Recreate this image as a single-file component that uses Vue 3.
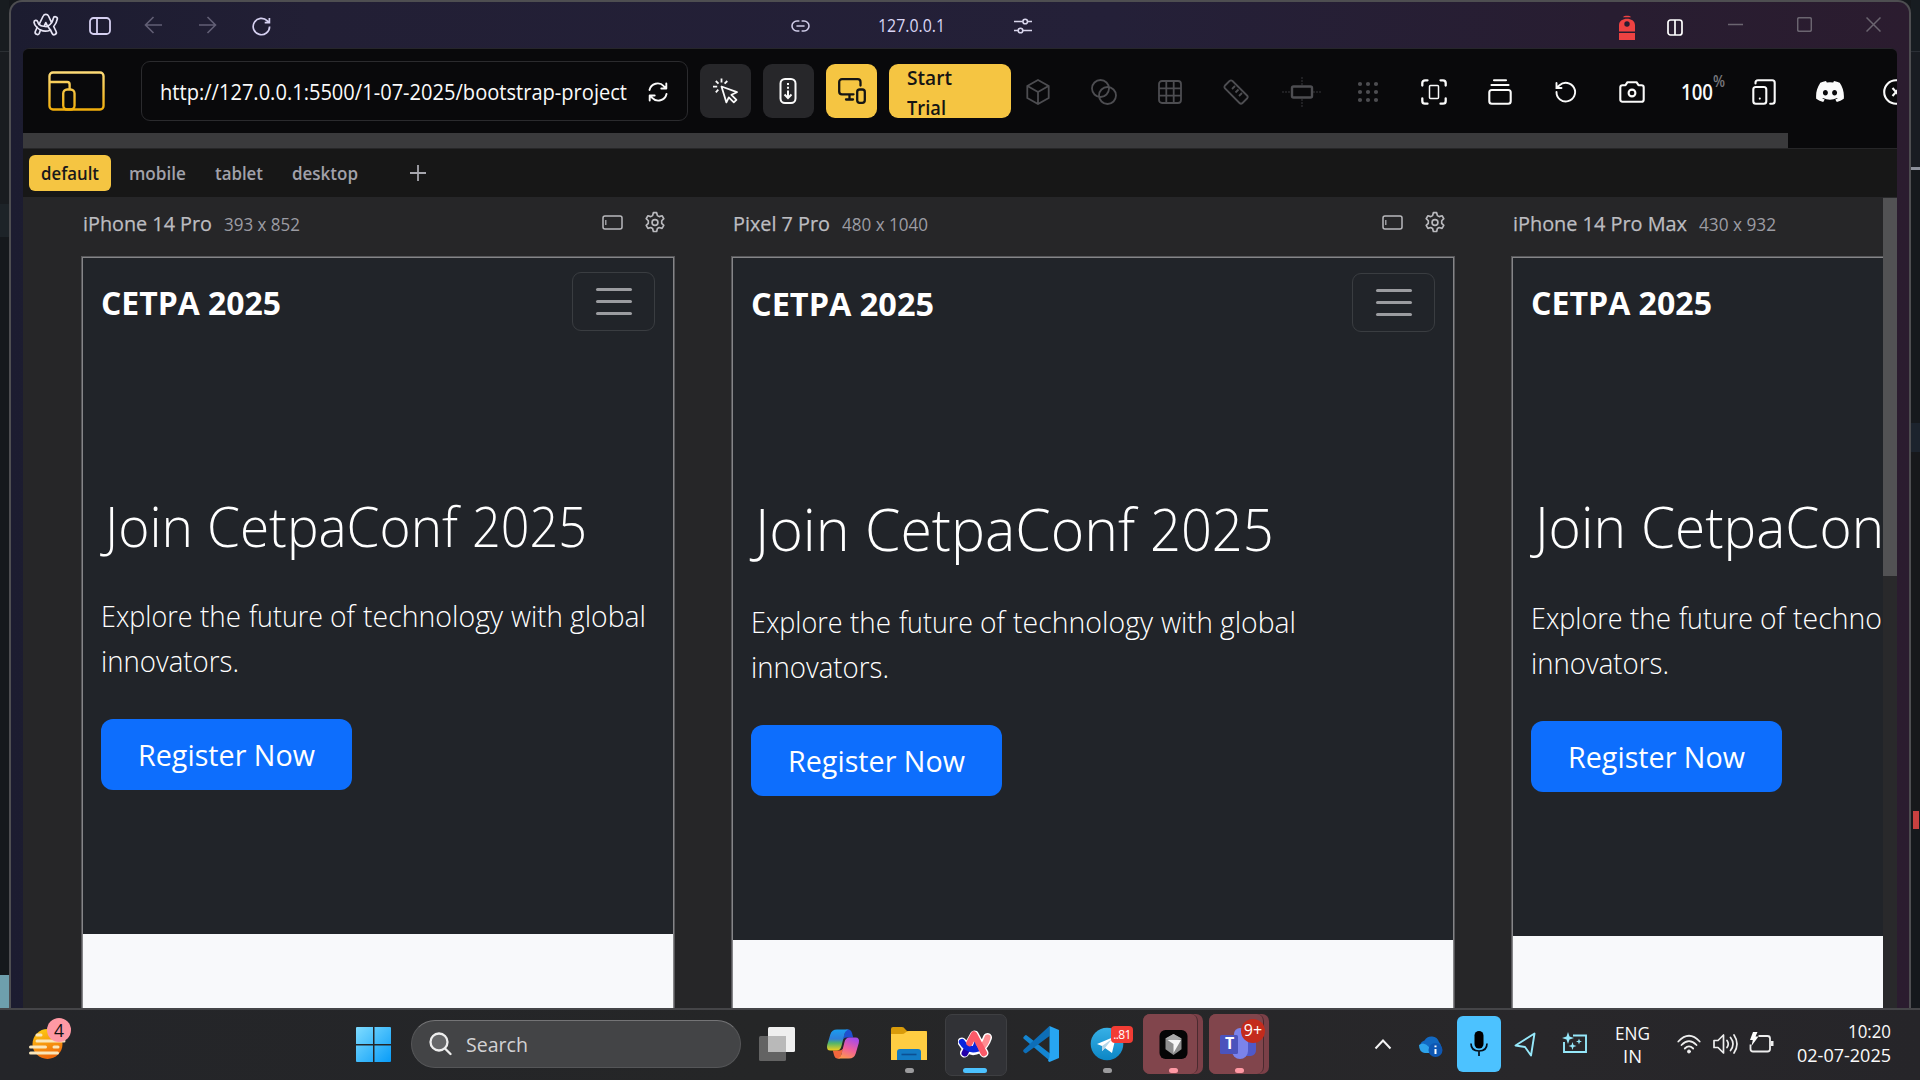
<script setup>
// Squeezes a text run horizontally so that it takes exactly the given width.
const vFit = {
  mounted(el, { value }) {
    const natural = el.getBoundingClientRect().width
    el.style.width = value + 'px'
    el.style.transform = `scaleX(${value / natural})`
  }
}

const tabs = [
  { name: 'default', width: 58, active: true },
  { name: 'mobile', width: 57 },
  { name: 'tablet', width: 48 },
  { name: 'desktop', width: 66 }
]

const devices = [
  { id: 'iphone', name: 'iPhone 14 Pro', nameWidth: 129, size: '393 x 852', sizeWidth: 76, brand: 180, scale: 1 },
  { id: 'pixel', name: 'Pixel 7 Pro', nameWidth: 97, size: '480 x 1040', sizeWidth: 86, brand: 183, scale: 1.076 },
  { id: 'promax', name: 'iPhone 14 Pro Max', nameWidth: 174, size: '430 x 932', sizeWidth: 77, brand: 181, scale: 1.034 }
]

const titleWords = [['Join', 88], ['CetpaConf', 251], ['2025', 115]]
const leadWords = [['Explore', 91.5], ['the', 41], ['future', 74], ['of', 25], ['technology', 140], ['with', 52], ['global', 76]]
</script>

<template>
  <div class="screen">
    <div class="desktop">
      <div class="edge left">
        <i class="edge-top"></i><i class="edge-mid"></i><i class="edge-tab"></i><i class="edge-teal"></i>
      </div>

      <div class="window">
        <header class="titlebar">
          <div class="tb-left">
            <svg class="arc-mark" width="26" height="24" viewBox="0 0 26 24" fill="none" stroke="#e6e4f4" stroke-width="1.7" stroke-linejoin="round" stroke-linecap="round">
              <path d="M7.500 17 6.300 20.300a2.200 2.200 0 0 1-4-1.800l1.800-4C2.300 12.900 1.200 11 1 9.300a1.900 1.900 0 0 1 3.700-.6c.2 1 .7 2 1.400 2.700L10.200 3c1-2.200 4.300-2.200 5.300 0l3.100 6.600c.9-1.300 1.400-2.800 1.700-4.200a2 2 0 0 1 4 .8c-.6 2.900-1.800 5.300-3.600 7.300l2.400 5a2.200 2.200 0 0 1-4 1.900l-1.700-3.500c-3.200 1.600-6.800 1.700-9.900.1Z" />
              <path d="m11.200 13.200 1.600-3.600 1.900 3.700c-1.200.4-2.400.3-3.500-.1ZM6.100 11.400c1.400 1.500 3.200 2 5.100 1.800M4.100 14.500c1 1 2.100 1.900 3.400 2.500M18.600 9.600c-1.100 1.700-2.500 3-3.900 3.700l2.700 3.600" />
            </svg>
            <svg width="22" height="18" viewBox="0 0 22 18" fill="none" stroke="#d5d0f0" stroke-width="1.8"><rect x="1" y="1" width="20" height="16" rx="3.500" /><path d="M8 1v16" /></svg>
            <svg class="dim" width="19" height="18" viewBox="0 0 19 18"><path d="M18 9H1.500M9.500 1 1.500 9l8 8" /></svg>
            <svg class="dim" width="19" height="18" viewBox="0 0 19 18"><path d="M1 9h16.500M9.500 1l8 8-8 8" /></svg>
            <svg width="19" height="19" viewBox="0 0 19 19" fill="none" stroke="#d5d0f0" stroke-width="1.700"><path d="M17.600 9.500a8.200 8.200 0 1 1-2.300-5.700l1.700 1.700M17.400 1v4.700h-4.700" /></svg>
          </div>
          <div class="tb-mid">
            <svg width="19" height="12" viewBox="0 0 19 12" fill="none" stroke="#cfcbe8" stroke-width="1.600" stroke-linecap="round"><path d="M7.800 1H6a5 5 0 0 0 0 10h1.800M11.200 1H13a5 5 0 0 1 0 10h-1.800M6 6h7" /></svg>
            <span class="host"><span v-fit="67" class="t">127.0.0.1</span></span>
            <svg width="18" height="16" viewBox="0 0 18 16" fill="none" stroke="#d9d6ec" stroke-width="1.600"><path d="M0 3.500h8.500M14 3.500h4M0 12.500h4M9 12.500h9" /><circle cx="11.200" cy="3.500" r="2.300" /><circle cx="6.500" cy="12.500" r="2.300" /></svg>
          </div>
          <div class="tb-right">
            <svg class="siren" width="16" height="25" viewBox="0 0 16 25" fill="#ee4242"><path d="M4 2.300C5 .4 11 .4 12 2.300ZM0 16.500V10C0 1.500 16 1.500 16 10v6.500ZM0 18h16v7H0Z" /><circle cx="8" cy="9" r="2.700" fill="#281c31" /></svg>
            <svg class="split" width="16" height="17" viewBox="0 0 16 17" fill="none" stroke="#fff" stroke-width="1.700"><rect x="1" y="1" width="14" height="15" rx="2.500" /><path d="M8 1v15" /></svg>
            <svg class="win" width="15" height="15" viewBox="0 0 15 15"><path d="M0 7.500h15" /></svg>
            <svg class="win" width="15" height="15" viewBox="0 0 15 15"><rect x=".7" y=".7" width="13.600" height="13.600" rx="1.500" /></svg>
            <svg class="win" width="15" height="15" viewBox="0 0 15 15"><path d="m.5.5 14 14m0-14-14 14" /></svg>
          </div>
        </header>

        <main class="panel">
          <div class="toolbar">
            <svg class="logo" width="57" height="40" viewBox="0 0 58 40" preserveAspectRatio="none" fill="none" stroke="url(#gold)" stroke-width="2.400">
              <defs><linearGradient id="gold" x1="0" y1="0" x2="0" y2="40" gradientUnits="userSpaceOnUse"><stop offset="0" stop-color="#fddc7a" /><stop offset="1" stop-color="#f0ac08" /></linearGradient></defs>
              <rect x="1.500" y="1.500" width="55" height="37" rx="3.500" /><path d="M1.500 11h18q2.500 0 2.500 2.500V19" /><rect x="15.500" y="18.500" width="11.500" height="20" rx="4" />
            </svg>
            <div class="url">
              <span v-fit="467" class="t">http://127.0.0.1:5500/1-07-2025/bootstrap-project</span>
              <svg width="20" height="20" viewBox="0 0 20 20" fill="none" stroke="#fafafa" stroke-width="1.900" stroke-linecap="round" stroke-linejoin="round"><path d="M1.500 8A8.300 8.300 0 0 1 15.800 4.200L18 6.500M18.300 1.500v5h-5M18.500 12A8.300 8.300 0 0 1 4.200 15.800L2 13.500M1.700 18.500v-5h5" /></svg>
            </div>
            <div class="btn">
              <svg width="26" height="26" viewBox="0 0 26 26" fill="none" stroke="#fafafa" stroke-width="1.800" stroke-linejoin="round"><path d="M8.500 8.500 24 14.200l-5.600 2.600 5 5-2.600 2.600-5-5-2.400 5ZM8.500.5v4M2.800 3l2.700 2.700M0 8.700h4.200M2.800 14.300l2.500-2.600M14.300 3l-2.700 2.700" /></svg>
            </div>
            <div class="btn scroll-sync">
              <svg width="18" height="26" viewBox="0 0 18 26" fill="none" stroke="#fafafa" stroke-width="2"><rect x="1.500" y="1" width="15" height="24" rx="4.500" /><path d="M9 5v8" stroke-dasharray="2 1.800" /><path d="M9 13v6.500M5.500 16.500 9 20l3.500-3.500" /></svg>
            </div>
            <div class="btn gold">
              <svg width="28" height="26" viewBox="0 0 28 26" fill="none" stroke="#141414" stroke-width="2.300" stroke-linecap="round"><path d="M22.500 7.500V4a2.800 2.800 0 0 0-2.800-2.800H4A2.800 2.800 0 0 0 1.200 4v9.500A2.800 2.800 0 0 0 4 16.300h11.500M11.500 17v4.500M8 21.500h7" /><rect x="19.200" y="11.500" width="7.600" height="13.300" rx="2.500" /></svg>
            </div>
            <div class="trial"><span v-fit="45" class="t">Start</span><span v-fit="39" class="t">Trial</span></div>
            <div class="tools">
              <div class="tool off"><svg width="24" height="26" viewBox="0 0 24 26"><path d="M12 1 22.700 7v12L12 25 1.300 19V7ZM1.500 7 12 13l10.500-6M12 13v12" /></svg></div>
              <div class="tool off"><svg width="26" height="26" viewBox="0 0 26 26"><circle cx="9.500" cy="9.500" r="8.500" /><circle cx="16.500" cy="16.500" r="8.500" /></svg></div>
              <div class="tool off"><svg width="24" height="24" viewBox="0 0 24 24"><rect x="1" y="1" width="22" height="22" rx="3" /><path d="M8.300 1v22M15.700 1v22M1 8.300h22M1 15.700h22" /></svg></div>
              <div class="tool off"><svg width="26" height="26" viewBox="0 0 26 26"><path d="M2 6.500 6.500 2Q8 .8 9.500 2L24 16.500q1.500 1.500 0 3L19.500 24q-1.500 1.500-3 0L2 9.500Q.8 8 2 6.500ZM9 10l3-3M12.500 13.500l3-3M16 17l3-3" /></svg></div>
              <div class="tool off"><svg width="40" height="30" viewBox="0 0 40 30"><rect x="10" y="9.500" width="20" height="11" rx="1.500" stroke-width="2.400" /><path d="M0 15h9M31 15h9M20 0v8M20 22v8" stroke-width="1" stroke-dasharray="2 1" opacity=".7" /></svg></div>
              <div class="tool off"><svg width="22" height="22" viewBox="0 0 22 22"><path d="M3 3h0M11 3h0M19 3h0M3 11h0M11 11h0M19 11h0M3 19h0M11 19h0M19 19h0" stroke-width="4.200" stroke-linecap="round" /></svg></div>
              <div class="tool"><svg width="26" height="26" viewBox="0 0 26 26" stroke-linecap="round"><path d="M1.300 6.500V4a2.700 2.700 0 0 1 2.700-2.700h2.500M19.500 1.300H22A2.700 2.700 0 0 1 24.700 4v2.500M24.700 19.500V22a2.700 2.700 0 0 1-2.700 2.700h-2.500M6.500 24.700H4A2.700 2.700 0 0 1 1.300 22v-2.500" stroke-width="2.300" /><rect x="8.500" y="6.500" width="9" height="13" rx="1" stroke-width="1.500" /></svg></div>
              <div class="tool"><svg width="24" height="26" viewBox="0 0 24 26" stroke-linecap="round"><path d="M6 1.300h12M3.500 6h17" /><rect x="1.300" y="11" width="21.400" height="13.800" rx="2.500" /></svg></div>
              <div class="tool"><svg width="22" height="22" viewBox="0 0 22 22" stroke-linecap="round"><path d="M1.500 11A9.300 9.300 0 1 0 4.500 4.300L1.500 7M1.500 2v5h5" stroke-width="1.900" /></svg></div>
              <div class="tool"><svg width="26" height="22" viewBox="0 0 26 22" stroke-linejoin="round"><path d="M8.500 1.200h9l2 3h3q2.200 0 2.200 2.200v12q0 2.300-2.200 2.300H3.500q-2.200 0-2.200-2.300v-12q0-2.200 2.200-2.200h3Z" /><circle cx="13" cy="12" r="3.400" /></svg></div>
              <div class="tool zoom"><span v-fit="32" class="t">100</span><span v-fit="12" class="t pct">%</span></div>
              <div class="tool"><svg width="24" height="26" viewBox="0 0 24 26" stroke-linecap="round"><rect x="1.300" y="8" width="13" height="16.800" rx="2.500" /><path d="M3.500 4.500v-.7q0-2.500 2.500-2.500h14.200q2.500 0 2.500 2.500v18.500q0 2.500-2.500 2.500h-2M7.800 19.500v.1" /></svg></div>
              <div class="tool solid"><svg width="28" height="21" viewBox="0 0 28 21"><path d="M23.700 1.800A23 23 0 0 0 18 0l-.8 1.600a21 21 0 0 0-6.400 0L10 0a23 23 0 0 0-5.700 1.800C.7 7.200-.3 12.500.2 17.700A23 23 0 0 0 7.200 21l1.500-2.400-2.300-1.100.5-.4a16.500 16.500 0 0 0 14.200 0l.5.4-2.300 1.100L20.800 21a23 23 0 0 0 7-3.300c.6-6-1-11.200-4.100-15.900ZM9.400 14.500c-1.400 0-2.500-1.300-2.500-2.800s1.100-2.800 2.500-2.800 2.500 1.300 2.500 2.800-1.100 2.800-2.500 2.800Zm9.200 0c-1.400 0-2.500-1.300-2.500-2.800s1.100-2.800 2.500-2.800 2.500 1.300 2.500 2.800-1.100 2.800-2.500 2.800Z" /></svg></div>
              <div class="tool"><svg width="26" height="26" viewBox="0 0 26 26"><circle cx="13" cy="13" r="11.800" /><path d="m9.500 9 7 8m0-8-7 8" /></svg></div>
            </div>
          </div>
          <div class="hscroll"><i></i></div>

          <nav class="tabs">
            <span v-for="tab in tabs" :key="tab.name" class="tab" :class="{ active: tab.active }"><span v-fit="tab.width" class="t">{{ tab.name }}</span></span>
            <svg width="16" height="16" viewBox="0 0 16 16" stroke="#a6a6ad" stroke-width="1.800"><path d="M8 0v16M0 8h16" /></svg>
          </nav>

          <div class="canvas">
            <div class="devices">
              <section v-for="d in devices" :key="d.id" class="device" :class="d.id">
                <div class="caption">
                  <span v-fit="d.nameWidth" class="t name">{{ d.name }}</span>
                  <span v-fit="d.sizeWidth" class="t size">{{ d.size }}</span>
                  <svg class="rotate" width="21" height="15" viewBox="0 0 21 15" fill="none" stroke="#b9b9bd" stroke-width="1.500"><rect x="1" y="1" width="19" height="13" rx="2" /><path d="M3.800 5v5" stroke-width="1.200" /></svg>
                  <svg class="gear" width="22" height="23" viewBox="0 0 24 24" fill="none" stroke="#b9b9bd" stroke-width="1.800" stroke-linejoin="round"><path d="M10.200 1.300h3.600l.8 3.200 2 1.100 3.100-1 1.900 3.200-2.300 2.300v2.800l2.300 2.300-1.900 3.200-3.100-.9-2 1.100-.8 3.200h-3.600l-.8-3.200-2-1.100-3.100.9-1.900-3.200 2.300-2.300v-2.800L2.400 7.800l1.900-3.200 3.100 1 2-1.100Z" /><circle cx="12" cy="12" r="3.200" /></svg>
                </div>
                <div class="frame">
                  <div class="hero">
                    <div class="navbar">
                      <span v-fit="d.brand" class="t brand">CETPA 2025</span>
                      <div class="toggler"><i></i><i></i><i></i></div>
                    </div>
                    <div class="title"><template v-for="w in titleWords" :key="w[0]"><span v-fit="w[1] * d.scale" class="t">{{ w[0] }}</span>{{ ' ' }}</template></div>
                    <div class="lead">
                      <div><template v-for="w in leadWords" :key="w[0]"><span v-fit="w[1]" class="t">{{ w[0] }}</span>{{ ' ' }}</template></div>
                      <div><span v-fit="138" class="t">innovators.</span></div>
                    </div>
                    <div class="register"><span v-fit="177" class="t">Register Now</span></div>
                  </div>
                </div>
              </section>
            </div>
            <div class="vscroll"><i></i></div>
          </div>
        </main>
      </div>

      <div class="edge right">
        <i class="r1"></i><i class="r2"></i><i class="r3"></i><i class="r4"></i><i class="r5"></i><i class="r6"></i><i class="r7"></i>
      </div>
    </div>

    <footer class="taskbar">
      <div class="weather">
        <svg width="42" height="40" viewBox="0 0 42 40"><defs><linearGradient id="sun" x1="0" y1="0" x2=".3" y2="1"><stop offset="0" stop-color="#ffd313" /><stop offset="1" stop-color="#ef6a0b" /></linearGradient></defs><circle cx="18.500" cy="20" r="15" fill="url(#sun)" /><path d="M8 11h4M8 17h27M1.500 23h15M25 23h4M1.500 29h27" stroke="#fae6ba" stroke-width="3" stroke-linecap="round" /></svg>
        <b class="badge">4</b>
      </div>
      <svg class="start" width="36" height="36" viewBox="0 0 36 36"><defs><linearGradient id="win" x1="0" y1="0" x2="1" y2="1" ><stop offset="0" stop-color="#7fdcff" /><stop offset="1" stop-color="#089cf8" /></linearGradient></defs><path d="M1 0h16v17H0V1q0-1 1-1ZM18.500 0H34q1 0 1 1v16H18.500ZM0 18.500h17V35H1q-1 0-1-1ZM18.500 18.500H35V34q0 1-1 1H18.500Z" fill="url(#win)" /></svg>
      <div class="search">
        <svg width="23" height="24" viewBox="0 0 23 24" fill="none" stroke="#eee" stroke-width="2.300" stroke-linecap="round"><circle cx="10" cy="10" r="8.500" fill="#666769" /><path d="m16 16.500 5.500 5.500" /></svg>
        <span v-fit="62" class="t">Search</span>
      </div>
      <div class="apps">
        <div class="app"><svg width="36" height="35" viewBox="0 0 36 35"><rect x="9" width="27" height="25" rx="1.500" fill="#efefef" /><rect y="9" width="27" height="25" rx="1.500" fill="#636363" /><path d="M9 9h18v16H9z" fill="#b9b9b9" /></svg></div>
        <div class="app"><svg width="34" height="32" viewBox="0 0 34 32"><defs><linearGradient id="cpa" x1="0" y1="0" x2="0" y2="1"><stop offset="0" stop-color="#1a9df0" /><stop offset=".45" stop-color="#2f7fd8" /><stop offset=".65" stop-color="#52b56a" /><stop offset="1" stop-color="#f3cf1c" /></linearGradient><linearGradient id="cpb" x1=".6" y1="0" x2=".2" y2="1"><stop offset="0" stop-color="#a84be8" /><stop offset=".5" stop-color="#f0609a" /><stop offset="1" stop-color="#ff9b48" /></linearGradient></defs><path d="M20 1.500h2.500q2.500 0 3.500 3.500l1.200 4.500H21q-4 0-5 4Z" fill="#1f4fd0" /><path d="M14 30.500h-2.500Q9 30.500 8 27l-1.200-4.500H13q4 0 5-4Z" fill="#f2663c" /><path d="M11 1.500h12q-3.500.5-4.500 4.500l-3 12q-1 4.500-5 4.500H4.500q-4.500 0-3.300-5.500L4.300 6.500Q5.800 1.500 11 1.500Z" fill="url(#cpa)" /><path d="M23 30.500H11q3.500-.5 4.500-4.500l3-12q1-4.500 5-4.500h6q4.500 0 3.300 5.500l-3.100 10.500q-1.500 5-6.700 5Z" fill="url(#cpb)" /></svg></div>
        <div class="app run"><svg width="36" height="34" viewBox="0 0 36 34"><path d="M0 2Q0 0 2 0h9q2 0 3 2l2 2H36v12H0Z" fill="#d99b0a" /><path d="M0 7h11q2 0 3.500-1.500T18 4h16q2 0 2 2v27H0Z" fill="#ffcd42" /><path d="M6 33V25q0-3 3-3h18q3 0 3 3v8Z" fill="#137bc4" /><path d="M10.500 27.500h15" stroke="#0c4f92" stroke-width="1.600" /></svg></div>
        <div class="app run current"><svg width="34" height="30" viewBox="0 0 34 30" fill="none" stroke-linecap="round" stroke-linejoin="round"><path d="M6.500 24 16.500 6l9.500 18M4 13q7 12 17 7 6-4 8.500-11.500" stroke="#fff" stroke-width="9" /><path d="M29.500 8.500q-1.500 6-6 10" stroke="#ff8d92" stroke-width="6" /><path d="M6.800 24.200 10 18" stroke="#2400a8" stroke-width="6.500" /><path d="M4 13q5.500 9.500 16 6.500" stroke="#0a25dc" stroke-width="6.300" /><path d="m11.500 14 4.500-8.500 9.800 18.500" stroke="#fb5a68" stroke-width="6.500" /><path d="M16.500 12.500 20 20.500h-6.500Z" fill="#0a25dc" /></svg></div>
        <div class="app"><svg width="36" height="36" viewBox="0 0 36 36"><path d="m3.500 9.300 23.500 18.200V35L1 13q-1.500-1.300 0-2.600l1-1q.7-.7 1.500-.1Z" fill="#1485d1" /><path d="M26.500 0v10L3.500 27q-1 .6-1.700 0L.8 26q-1.300-1.300 0-2.600Z" fill="#0d6eb8" /><path d="M26.500 0 36 4v28l-9.500 4-1.500-1 1.500-4Z" fill="#27a5f2" /></svg></div>
        <div class="app run telegram"><svg width="34" height="34" viewBox="0 0 34 34"><defs><linearGradient id="tg" x1="0" y1="0" x2="0" y2="1"><stop offset="0" stop-color="#37b0e6" /><stop offset="1" stop-color="#0c86c5" /></linearGradient></defs><circle cx="17" cy="17" r="16.300" fill="url(#tg)" /><path d="M7 17 26 9l-4 17-7-5-3 3v-5Z" fill="#fff" /><path d="m12 19 10-7-7 9-3 3Z" fill="#b4d5e8" /></svg><b class="count">..81</b></div>
        <div class="app run alert"><div class="tile"></div><svg width="29" height="29" viewBox="0 0 28 29"><rect width="28" height="29" rx="6" fill="#050505" /><path d="m14 4 8 4.500v10.800L14 25l-8-5.700V8.500Z" fill="#8f8f8f" /><path d="m6 8.500 8-4.500 8 4.500-8 3Z" fill="#aaa" /><path d="M8 10h13.500L14 23v-9Z" fill="#f7f7f7" /></svg></div>
        <div class="app run alert teams"><div class="tile"></div><svg width="38" height="34" viewBox="0 0 38 34"><circle cx="20" cy="7" r="6" fill="#7b83eb" /><path d="M26 11h10v12q0 5-5 6h-5Z" fill="#5059c9" /><path d="M12 11h16v13a8 8 0 0 1-16 0Z" fill="#7b83eb" /><rect y="8" width="18" height="19" rx="1.500" fill="#4b53bc" /></svg><em>T</em><b class="badge">9+</b></div>
      </div>
      <div class="tray">
        <svg class="chev" width="18" height="11" viewBox="0 0 18 11" fill="none" stroke="#f4f4f4" stroke-width="2"><path d="m1.500 9.500 7.500-8 7.500 8" /></svg>
        <svg class="cloud" width="26" height="22" viewBox="0 0 26 22"><path d="M7 18a6.500 6.500 0 0 1-.5-12.500A8 8 0 0 1 21 7q3 3 2 8l-5 3Z" fill="#1269c2" /><path d="M1 10q5-4 10 2l4 6H7Q1 17 1 10Z" fill="#2da3ea" /><circle cx="17.500" cy="15" r="7" fill="#0e57b3" /><path d="M17.500 14v5M17.500 10.500v1.800" stroke="#fff" stroke-width="2" /></svg>
        <div class="mic"><svg width="18" height="26" viewBox="0 0 18 26"><rect x="4.500" width="9" height="17.500" rx="4.500" /><path d="M1 12.500q0 7.500 8 7.500t8-7.500M9 20v5" fill="none" stroke="#05101a" stroke-width="1.700" /></svg></div>
        <svg class="nav" width="22" height="25" viewBox="0 0 22 25" fill="none" stroke="#96e8fa" stroke-width="1.900" stroke-linejoin="round"><path d="M20.500 1.500 17 23.500l-6-8.500L1.500 13.500Z" /></svg>
        <svg class="snip" width="26" height="22" viewBox="0 0 26 22"><path d="M11 3.500h13V20H2V10" fill="none" stroke="#96e8fa" stroke-width="1.900" /><path d="m6 0 1.500 4.500L12 6 7.500 7.500 6 12 4.500 7.500 0 6l4.500-1.500ZM10.500 10l1 3 3 1-3 1-1 3-1-3-3-1 3-1ZM17 6.500l.8 2.200 2.200.8-2.200.8-.8 2.200-.8-2.200-2.200-.8 2.200-.8Z" fill="#96e8fa" /></svg>
        <div class="lang"><span v-fit="35" class="t">ENG</span><span v-fit="19" class="t">IN</span></div>
        <svg class="wifi" width="24" height="20" viewBox="0 0 24 20" fill="none" stroke="#eee" stroke-width="1.800" stroke-linecap="round"><path d="M1.300 7.500q10.700-11.500 21.400 0M4.500 11q7.500-7.800 15 0M7.800 14.500q4.200-4.200 8.400 0" /><circle cx="12" cy="17.500" r="1.500" fill="#eee" stroke-width="1" /></svg>
        <svg class="sound" width="25" height="22" viewBox="0 0 25 22" fill="none" stroke="#eee" stroke-width="1.700" stroke-linejoin="round" stroke-linecap="round"><path d="M1 7.500h4L10.500 2v18L5 14.500H1ZM14 7.500q2.500 3.500 0 7M17.500 4.500q5 6.500 0 13M21 2q6 9 0 18" /></svg>
        <svg class="battery" width="25" height="21" viewBox="0 0 25 21" fill="none" stroke="#eee" stroke-width="1.800"><path d="M9.500 4h9q2.500 0 2.500 2.500V17q0 2.500-2.500 2.500H4q-2.500 0-2.500-2.500v-4.500" /><path d="M23.200 9v5" stroke-width="2.600" /><path d="M4 0h4.500L6.500 4.500h3L2.500 14l1.300-6H1Z" fill="#fff" stroke="none" /></svg>
        <div class="clock"><span v-fit="43" class="t">10:20</span><span v-fit="94" class="t">02-07-2025</span></div>
      </div>
    </footer>
  </div>
</template>

<style>
body { margin: 0; background: #14171b; overflow: hidden; }
</style>

<style scoped>
* { box-sizing: border-box; }
.screen { width: 1920px; height: 1080px; overflow: hidden; display: flex; flex-direction: column; background: #15181c; color: #fafafa; font-family: "Open Sans", "Noto Sans", sans-serif; }
svg { display: block; flex: none; }
i { display: block; }
.t { display: inline-block; white-space: nowrap; transform-origin: 0 50%; flex: none; }

.desktop { height: 1008px; display: flex; }
.edge { width: 9px; display: flex; flex-direction: column; }
.edge-top { height: 52px; background: #181c20; border-bottom: 1px solid #2b2f33; }
.edge-mid { height: 152px; background: #191c20; }
.edge-tab { height: 33px; background: #1d2328; }
.edge-teal { margin-top: auto; height: 33px; background: #6e9fad; }
.r1 { height: 52px; background: #171c21; border-bottom: 1px solid #2b2f36; }
.r2 { height: 115px; background: #191c22; }
.r3 { height: 3px; background: #8d919c; }
.r4 { height: 253px; background: #16191d; }
.r5 { height: 29px; background: #1c232d; }
.r6 { height: 359px; background: #17181b; }
.r7 { height: 18px; width: 6px; margin-left: 2px; background: #c84040; }

.window { width: 1902px; height: 1008px; border: 2px solid #4e4e51; border-bottom: 0; border-radius: 13px 13px 0 0; overflow: hidden; display: flex; flex-direction: column; background: linear-gradient(90deg, #1c1c30 0, #221f35 300px, #242038 1100px, #281d31 1600px, #2b1c2f 100%); }
.titlebar { height: 46px; display: flex; align-items: center; flex: none; padding-bottom: 1px; }
.tb-left { display: flex; align-items: center; padding-left: 22px; width: 780px; }
.tb-left svg { margin-right: 35px; margin-top: 3px; }
.tb-left .arc-mark { margin-right: 30px; margin-top: 1px; }
.tb-left svg:nth-child(2) { margin-right: 33px; }
.tb-left .dim { fill: none; stroke: #625f75; stroke-width: 1.6; margin-top: 1px; }
.tb-mid { display: flex; align-items: center; }
.tb-mid svg { margin-top: 3px; }
.host { margin-left: 68px; width: 67px; margin-right: 69px; font-size: 18px; line-height: 24px; color: #d9d5f4; }
.tb-right { margin-left: auto; display: flex; align-items: center; padding-right: 28px; }
.siren { margin: 5px 32px 0 0; }
.split { margin: 5px 45px 0 0; }
.win { fill: none; stroke: #6b6570; stroke-width: 1.5; margin-left: 54px; }
.split + .win { margin-left: 0; }

.panel { margin: 0 12px 0 12px; flex: 1; min-height: 0; background: #09090b; border-radius: 6px 6px 0 0; border-top: 1px solid #26262a; display: flex; flex-direction: column; overflow: hidden; }
.toolbar { height: 84px; display: flex; align-items: center; padding: 0 0 0 25px; overflow: hidden; flex: none; }
.url { width: 547px; height: 60px; margin-left: 36px; border: 1px solid #2b2b2e; border-radius: 9px; display: flex; align-items: center; padding: 2px 19px 0 18px; justify-content: space-between; font-size: 21px; line-height: 30px; flex: none; }
.btn { width: 51px; height: 54px; border-radius: 9px; background: #27272a; margin-left: 12px; display: flex; align-items: center; justify-content: center; flex: none; }
.scroll-sync { padding-right: 1px; }
.gold { background: #f5c542; }
.trial { width: 122px; height: 54px; margin-left: 12px; border-radius: 9px; background: #f5c542; color: #141414; padding: 2px 0 0 18px; font-size: 20.500px; font-weight: 600; line-height: 30px; display: flex; flex-direction: column; justify-content: center; align-items: flex-start; flex: none; }
.tools { display: flex; margin-left: -6px; padding-top: 1px; flex: none; }
.tool { width: 66px; height: 54px; display: flex; align-items: center; justify-content: center; flex: none; }
.tool svg { fill: none; stroke: #fafafa; stroke-width: 2.1; }
.tool.off svg { stroke: #4d4d51; stroke-width: 1.8; }
.tool.solid svg { fill: #fafafa; stroke: none; }
.zoom { font-size: 21px; font-weight: 600; line-height: 30px; padding-left: 9px; }
.pct { font-size: 16px; color: #77777c; font-weight: 600; margin-top: -22px; }
.hscroll { height: 15px; background: #09090b; flex: none; }
.hscroll i { width: 1765px; height: 15px; background: #3a3a3c; }
.tabs { height: 49px; border-top: 1px solid #262628; background: #171717; display: flex; align-items: center; padding: 0 0 4px 6px; flex: none; }
.tab { height: 36px; display: flex; align-items: center; margin-top: 3px; margin-right: 29px; border-radius: 6px; font-size: 17.500px; font-weight: 600; line-height: 24px; color: #a1a1aa; }
.tab.active { padding: 0 12px; background: #f5c542; color: #18181b; margin-right: 18px; }
.tabs svg { margin-left: 23px; margin-top: 3px; }

.canvas { flex: 1; min-height: 0; display: flex; background: #262628; }
.devices { flex: 1; min-width: 0; display: flex; gap: 56px; padding-left: 58px; overflow: hidden; }
.device { flex: none; width: 594px; display: flex; flex-direction: column; }
.pixel { width: 724px; }
.promax { width: 649px; }
.caption { height: 59px; padding: 0 9px 7px 2px; display: flex; align-items: center; flex: none; }
.name { font-size: 20.500px; font-weight: 500; line-height: 28px; color: #bdbdc1; margin-right: 12px; -webkit-text-stroke: .25px #bdbdc1; }
.size { font-size: 17.500px; line-height: 28px; padding-top: 2px; color: #9c9ca3; }
.rotate { margin-left: auto; margin-right: 21px; margin-top: -1px; }
.gear { margin-top: -1px; }
.frame { height: 900px; border: 1px solid #57575a; box-shadow: inset 0 0 0 1px #858588; padding: 1px; background: #f8f9fb; flex: none; }
.hero { height: 676px; background: #212429; padding: 14px 18px 0; }
.navbar { height: 59px; display: flex; justify-content: space-between; align-items: center; }
.brand { font-size: 32px; font-weight: 700; line-height: 44px; padding-top: 2px; color: #fff; }
.toggler { width: 83px; height: 59px; border: 1px solid #3a3d41; border-radius: 9px; display: flex; flex-direction: column; align-items: center; justify-content: center; gap: 9px; }
.toggler i { width: 36px; height: 3px; border-radius: 2px; background: #9b9ca0; }
.title { margin-top: 160px; height: 70px; line-height: 70px; font-size: 54.500px; font-weight: 300; color: #fff; padding-left: 4px; white-space: nowrap; }
.lead { margin-top: 33px; font-size: 29.400px; font-weight: 300; line-height: 45px; color: #fff; white-space: nowrap; }
.lead div { height: 45px; }
.register { margin-top: 35px; width: 251px; height: 71px; border-radius: 12px; background: #0d6efd; color: #fff; font-size: 29.500px; line-height: 72px; padding-left: 37px; }
.pixel .hero { height: 682px; padding-top: 15px; }
.pixel .title { margin-top: 161px; font-size: 58.500px; }
.pixel .lead { margin-top: 37px; }
.promax .hero { height: 678px; }
.promax .title { font-size: 57px; }
.promax .lead { margin-top: 35px; }
.vscroll { width: 14px; padding-top: 1px; background: #29292b; flex: none; }
.vscroll i { height: 378px; background: #525254; }

.taskbar { height: 72px; border-top: 2px solid #454548; background: linear-gradient(90deg, #242529, #252627 40%, #28272a 80%, #262529); display: flex; }
.weather { width: 356px; padding: 14px 0 0 29px; position: relative; flex: none; }
.badge { position: absolute; left: 47px; top: 8px; width: 24px; height: 24px; border-radius: 50%; background: #ff99a4; color: #111; font-size: 17.500px; font-weight: 400; line-height: 24px; text-align: center; }
.start { margin-top: 17px; }
.search { margin: 10px 0 0 19px; width: 330px; height: 48px; border-radius: 24px; background: #434446; border: 1px solid #555658; border-top-color: #747476; display: flex; align-items: center; padding-left: 17px; font-size: 19.500px; line-height: 28px; color: #d2d2d4; flex: none; }
.search svg { margin-right: 14px; }
.search .t { padding-top: 1px; }
.apps { display: flex; margin-left: 3px; flex: none; }
.app { width: 66px; height: 66px; display: flex; align-items: center; justify-content: center; position: relative; }
.app svg { position: relative; margin-top: 2px; }
.run::after { content: ""; position: absolute; left: 28.500px; top: 58px; width: 9px; height: 5px; border-radius: 3px; background: #9b9b9d; }
.current::before { content: ""; position: absolute; left: 3px; top: 4px; width: 60px; height: 60px; border-radius: 7px; background: #313236; border: 1px solid #3e3f42; }
.current::after { left: 21px; width: 24px; background: #4cc2ff; }
.tile { position: absolute; left: 3px; top: 4px; width: 60px; height: 60px; border-radius: 7px; background: #7b4048; }
.tile::after { content: ""; position: absolute; left: 0; top: 0; width: 54px; height: 60px; border-radius: 7px; background: #81454c; border-right: 1px solid #4a2a2f; }
.alert::after { background: #ff99a4; }
.alert svg { z-index: 1; }
.count { position: absolute; left: 37px; top: 16px; width: 22px; height: 17px; border-radius: 4px; background: #f23c34; color: #fff; font-size: 12px; font-weight: 400; line-height: 17px; text-align: center; letter-spacing: -.6px; white-space: nowrap; }
.teams em { position: absolute; z-index: 2; left: 19px; top: 22px; font: 700 16px/22px "Open Sans", sans-serif; color: #fff; }
.teams .badge { z-index: 2; left: 35px; top: 9px; background: #c42b1c; color: #fff; font-size: 16px; line-height: 23px; }
.tray { margin-left: auto; width: 546px; display: flex; align-items: center; height: 68px; flex: none; }
.cloud { margin-left: 26px; margin-top: 4px; }
.mic { width: 44px; height: 56px; border-radius: 6px; background: #4cc2ff; margin-left: 13px; display: flex; align-items: center; justify-content: center; flex: none; }
.nav { margin-left: 13px; }
.snip { margin-left: 26px; margin-top: -3px; }
.lang { width: 36px; margin-left: 26px; margin-top: 1px; display: flex; flex-direction: column; align-items: center; font-size: 17.500px; line-height: 23px; flex: none; }
.wifi { margin-left: 27px; }
.sound { margin-left: 12px; }
.battery { margin-left: 11px; margin-top: -4px; }
.clock { margin-left: auto; margin-right: 29px; margin-top: -2px; display: flex; flex-direction: column; align-items: flex-end; font-size: 17.500px; line-height: 24px; }
</style>
